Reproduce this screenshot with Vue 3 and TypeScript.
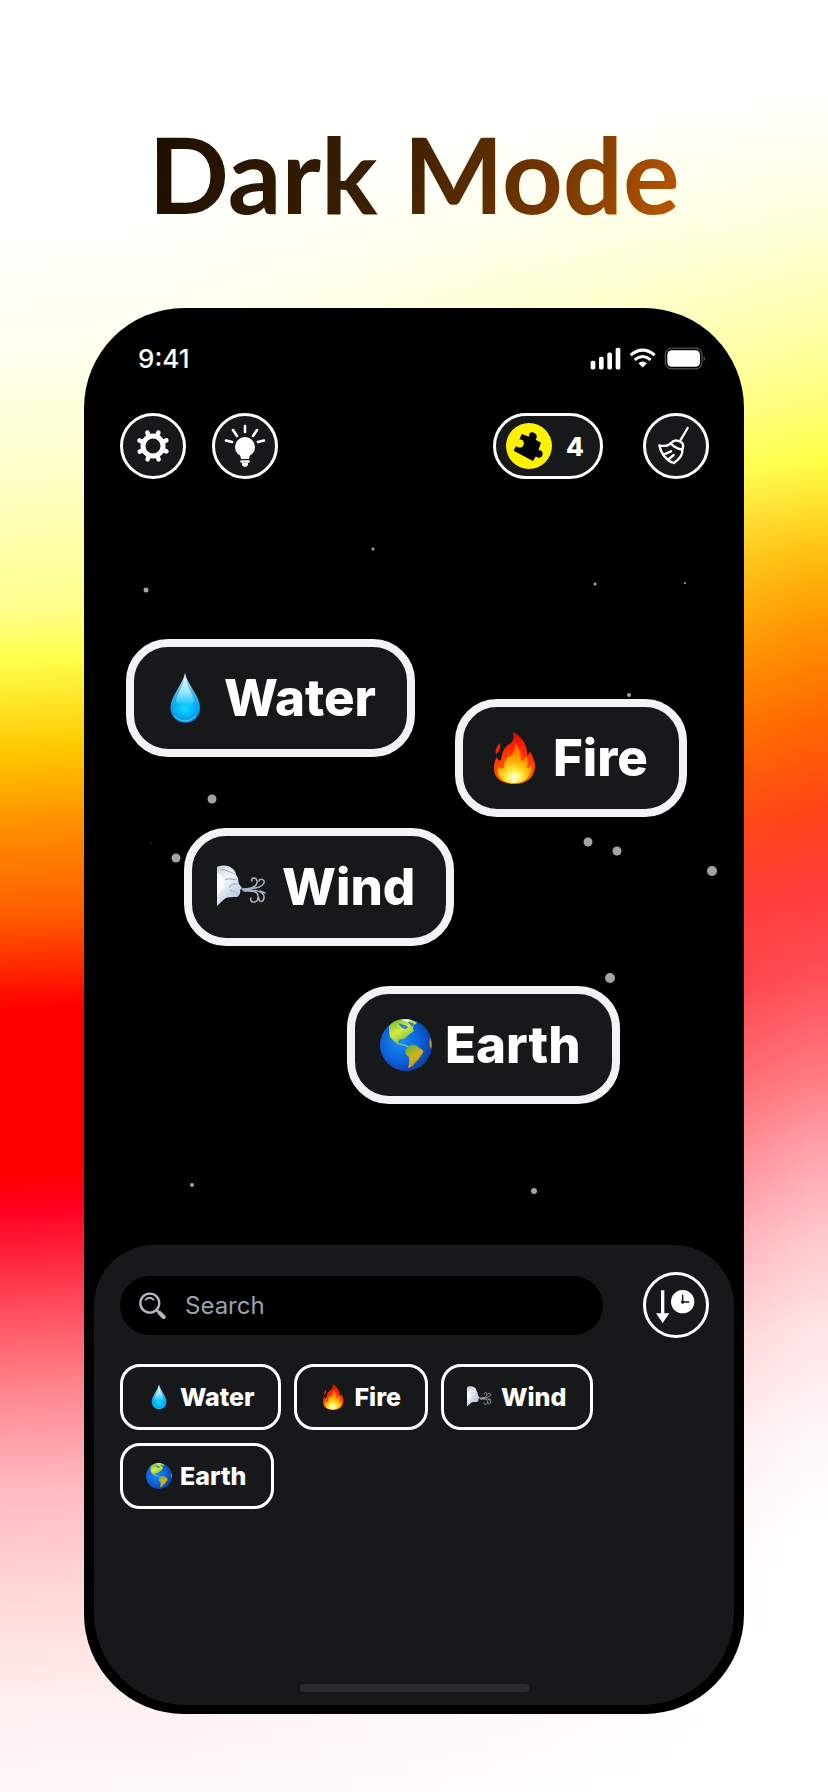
<script setup lang="ts">
import { ref } from 'vue'

interface Item {
  name: string
  icon: string
}

interface Placed extends Item {
  x: number
  y: number
}

interface Star {
  x: number
  y: number
  size: number
}

const items: Item[] = [
  { name: 'Water', icon: 'drop' },
  { name: 'Fire', icon: 'fire' },
  { name: 'Wind', icon: 'wind' },
  { name: 'Earth', icon: 'earth' },
]

const placed: Placed[] = [
  { name: 'Water', icon: 'drop', x: 42, y: 160 },
  { name: 'Fire', icon: 'fire', x: 371, y: 220 },
  { name: 'Wind', icon: 'wind', x: 100, y: 349 },
  { name: 'Earth', icon: 'earth', x: 263, y: 507 },
]

const stars: Star[] = [
  { x: 62, y: 111, size: 5 },
  { x: 289, y: 70, size: 3 },
  { x: 511, y: 105, size: 3 },
  { x: 601, y: 104, size: 2 },
  { x: 545, y: 216, size: 4 },
  { x: 128, y: 320, size: 9 },
  { x: 92, y: 379, size: 9 },
  { x: 504, y: 363, size: 9 },
  { x: 533, y: 372, size: 9 },
  { x: 628, y: 392, size: 10 },
  { x: 526, y: 499, size: 10 },
  { x: 67, y: 364, size: 1 },
  { x: 108, y: 706, size: 4 },
  { x: 450, y: 712, size: 6 },
]

const gearAngles = [22, 67, 112, 157, 202, 247, 292, 337]
const query = ref('')
const pieces = ref(4)
</script>

<template>
  <main class="poster">
    <svg class="defs" aria-hidden="true">
      <defs>
        <linearGradient id="dropFill" x1="0" y1="0" x2="0" y2="1">
          <stop offset="0" stop-color="#d6f6ff" />
          <stop offset="0.35" stop-color="#4fb9ea" />
          <stop offset="0.7" stop-color="#00a4f4" />
          <stop offset="1" stop-color="#0a8fe0" />
        </linearGradient>
        <linearGradient id="dropShine" x1="0" y1="0" x2="0" y2="1">
          <stop offset="0" stop-color="#e4fbff" />
          <stop offset="0.55" stop-color="#a2e6fb" />
          <stop offset="1" stop-color="#12c8fa" />
        </linearGradient>
        <radialGradient id="dropGlow" cx="0.5" cy="0.5" r="0.5">
          <stop offset="0" stop-color="#10dcff" />
          <stop offset="1" stop-color="#10dcff" stop-opacity="0" />
        </radialGradient>
        <radialGradient id="fireFill" gradientUnits="userSpaceOnUse" cx="26" cy="46" r="42">
          <stop offset="0" stop-color="#ff9d00" />
          <stop offset="0.45" stop-color="#ff4a00" />
          <stop offset="0.75" stop-color="#ff2200" />
          <stop offset="1" stop-color="#e01000" />
        </radialGradient>
        <radialGradient id="fireCore" gradientUnits="userSpaceOnUse" cx="26" cy="46" r="32">
          <stop offset="0" stop-color="#fffbd0" />
          <stop offset="0.25" stop-color="#ffea35" />
          <stop offset="0.55" stop-color="#ffa800" />
          <stop offset="1" stop-color="#ff6a00" />
        </radialGradient>
        <radialGradient id="fireGlow" cx="0.5" cy="0.7" r="0.6">
          <stop offset="0" stop-color="#fffde0" />
          <stop offset="1" stop-color="#ffe930" stop-opacity="0" />
        </radialGradient>
        <linearGradient id="faceFill" x1="0" y1="0" x2="0.6" y2="1">
          <stop offset="0" stop-color="#c3d0e2" />
          <stop offset="0.4" stop-color="#f3f7fc" />
          <stop offset="1" stop-color="#b4c3d8" />
        </linearGradient>
        <radialGradient id="seaFill" cx="0.4" cy="0.45" r="0.6">
          <stop offset="0" stop-color="#1d8bf5" />
          <stop offset="0.65" stop-color="#0c5fd8" />
          <stop offset="1" stop-color="#0a3fa4" />
        </radialGradient>
        <linearGradient id="landFill" x1="0" y1="0" x2="0.6" y2="1">
          <stop offset="0" stop-color="#57b83a" />
          <stop offset="0.5" stop-color="#d9ea3c" />
          <stop offset="1" stop-color="#4fb257" />
        </linearGradient>
        <linearGradient id="southFill" x1="0" y1="0" x2="0.5" y2="1">
          <stop offset="0" stop-color="#5fae35" />
          <stop offset="0.6" stop-color="#d2b322" />
          <stop offset="1" stop-color="#b08a20" />
        </linearGradient>
      </defs>
      <symbol id="drop" viewBox="0 0 52 52">
        <path d="M26 1C24 12 11.500 24 11.500 36A14.700 14.700 0 0 0 41 36C41 24 28 12 26 1Z" fill="url(#dropFill)" />
        <ellipse cx="26" cy="37" rx="13" ry="12" fill="url(#dropGlow)" />
        <path d="M26 3C25 13 18 22 17 29C19 34 33 34 35 29C34 22 27 13 26 3Z" fill="url(#dropShine)" />
        <path d="M15 44Q26 54 37 44" fill="none" stroke="#5cd0f6" stroke-width="1" />
      </symbol>
      <symbol id="fire" viewBox="0 0 52 52">
        <path d="M25 0C31 3 40 11 39 23C41 23 42 20 42 19C45 25 48 31 47 36C46 46 38 52 26 52C14 52 6 46 6 37C6 31 7 28 9 25C10 29 12 29 13 28C14 20 17 14 23 11C26 8 26 4 25 0Z" fill="url(#fireFill)" />
        <path d="M12 11C13 16 11 20 8 22C7 17 9 14 12 11Z" fill="#f02800" />
        <path d="M27 11C32 17 33 22 33 29C36 29 37 27 38 24C41 30 39 34 39 36C42 36 44 33 44 32C45 42 38 51 26 51C14 51 8 44 10 34C12 37 14 37 16 36C16 27 20 24 22 25C26 21 28 16 27 11Z" fill="url(#fireCore)" />
        <path d="M26 32C29 36 30 38 32 41C34 40 35 38 35 38C37 45 32 51 26 51C19 51 15 45 18 39C20 42 22 42 23 41Z" fill="url(#fireGlow)" />
      </symbol>
      <symbol id="wind" viewBox="0 0 52 52">
        <path d="M0 6C4 4 10 4 13 6C17 8 19 11 19 14C22 17 21 20 22 23L25 27L23 29C24 32 22 35 20 36C15 36 11 36 9 37C5 40 3 42 0 45Z" fill="url(#faceFill)" />
        <path d="M8 19C12 16 16 20 20 18M12 27C15 23 18 22 20 23M13 29L20 32M3 9C8 7 14 12 18 13" fill="none" stroke="#a4b2c8" stroke-width="1.200" />
        <path d="M0 12C5 13 7 17 7 22C7 29 3 32 0 34Z" fill="#fff" opacity="0.7" />
        <path d="M25 28C31 28 41 27 40 20C39 15 33 17 35 20M26 29C34 27 44 28 47 22C48 18 43 17 42 20M27 30C34 30 42 29 41 37C40 43 32 42 34 37M28 30C36 28 48 30 47 37C46 42 41 41 42 37M43 30L48 32" fill="none" stroke="#a9b6ca" stroke-width="1.500" stroke-linecap="round" />
      </symbol>
      <symbol id="earth" viewBox="0 0 52 52">
        <circle cx="26" cy="26" r="26" fill="url(#seaFill)" />
        <path d="M9 7C12 3 18 0 25 0C30 0 34 2 37 4C33 6 32 9 34 12C30 15 27 17 24 20C21 20 19 20 18 23C19 25 22 24 23 26C20 27 15 24 12 20C9 18 9 12 9 7Z" fill="url(#landFill)" />
        <path d="M18 4C22 6 25 5 28 8C27 11 23 10 21 8ZM27 2L35 5L32 8Z" fill="#2f86cf" />
        <path d="M21 1C24 0 28 0 31 1L28 3Z" fill="#e8f3e4" />
        <path d="M27 29C30 25 36 25 38 28C41 30 44 31 43 34C40 37 39 41 35 44C33 47 30 49 28 49C29 44 30 41 29 38C26 36 24 33 27 29Z" fill="url(#southFill)" />
        <path d="M50 19C52 22 52 28 51 30C49 27 49 22 50 19Z" fill="#b39a3a" />
        <path d="M20 25C23 26 26 26 28 28" fill="none" stroke="#5fc2a0" stroke-width="1.500" />
      </symbol>
    </svg>

    <h1 class="title">Dark Mode</h1>

    <section class="phone">
      <div class="status">
        <time class="clock">9:41</time>
        <svg class="signals" viewBox="358 140 348 68" role="img" aria-label="Signal, Wi-Fi and battery">
          <g fill="#fff">
            <rect x="360" y="181" width="14" height="26" rx="5" />
            <rect x="385" y="169" width="14" height="38" rx="5" />
            <rect x="410" y="156" width="14" height="51" rx="5" />
            <rect x="435" y="142" width="14" height="65" rx="5" />
            <path d="M516 201L503 188Q516 178 529 188Z" />
            <rect x="590" y="149" width="98" height="50" rx="13" />
          </g>
          <path d="M480 164Q516 134 552 164M492 178Q516 158 540 178" fill="none" stroke="#fff" stroke-width="9" />
          <rect x="584" y="143" width="110" height="62" rx="19" fill="none" stroke="#6a6a6a" stroke-width="3" />
          <path d="M699 166Q706 174 699 183Z" fill="#6a6a6a" />
        </svg>
      </div>

      <nav class="toolbar">
        <button class="round" type="button" aria-label="Settings">
          <svg viewBox="0 0 66 66">
            <circle cx="33" cy="33" r="10" fill="none" stroke="#fff" stroke-width="5" />
            <path v-for="angle in gearAngles" :key="angle" d="M33 22V18.500" :transform="`rotate(${angle} 33 33)`" stroke="#fff" stroke-width="4.500" stroke-linecap="round" />
          </svg>
        </button>
        <button class="round" type="button" aria-label="Hints">
          <svg viewBox="0 0 66 66">
            <circle cx="33" cy="34" r="10" fill="#fff" />
            <path d="M28 41H38L37 46H29ZM30 50H36V52Q33 56 30 52Z" fill="#fff" />
            <path d="M29.500 48.500H36.500M33 13V19M21 17L25 23M45 17L41 23M14 27.500L20 29M52 27.500L46 29" stroke="#fff" stroke-width="2.600" stroke-linecap="round" />
          </svg>
        </button>
        <button class="pill" type="button" aria-label="Puzzle pieces">
          <svg viewBox="108 370 138 138">
            <circle cx="177" cy="439" r="69" fill="#fff200" />
            <path d="M155 403L178 411C175 400 184 396 191 399C202 402 202 413 197 420L213 429L205 452C213 449 221 458 217 467C213 477 203 476 198 470L189 484L131 453L138 439C146 446 157 446 161 435C164 424 155 418 148 420Z" fill="#000" />
          </svg>
          <span>{{ pieces }}</span>
        </button>
        <button class="round" type="button" aria-label="Clear board">
          <svg viewBox="518 340 198 198">
            <g fill="none" stroke="#fff" stroke-width="7" stroke-linecap="round" stroke-linejoin="round">
              <path d="M652 385L629 424" />
              <path d="M601 431Q616 414 636 430Q641 438 636 450Q615 447 601 431Z" />
              <path d="M601 431C591 441 580 440 567 437C572 463 590 484 611 490C629 477 638 464 636 450" />
              <path d="M584 463L602 455M596 478L610 466" />
            </g>
          </svg>
        </button>
      </nav>

      <div class="board">
        <i
          v-for="(star, index) in stars"
          :key="index"
          class="star"
          :style="{ left: `${star.x}px`, top: `${star.y}px`, width: `${star.size}px`, height: `${star.size}px` }"
        ></i>
        <button
          v-for="item in placed"
          :key="item.name"
          class="card"
          type="button"
          :style="{ left: `${item.x}px`, top: `${item.y}px` }"
        >
          <svg aria-hidden="true"><use :href="`#${item.icon}`" /></svg>
          <span>{{ item.name }}</span>
        </button>
      </div>

      <section class="drawer">
        <div class="tools">
          <label class="search">
            <svg viewBox="165 168 80 80" aria-hidden="true">
              <g fill="none" stroke="#b3b9c2" stroke-linecap="round">
                <circle cx="197" cy="201" r="28" stroke-width="7" />
                <path d="M184 191Q196 179 209 191" stroke-width="5" />
                <path d="M219 223L226 230" stroke-width="7" />
                <path d="M226 230L238 242" stroke-width="12" />
              </g>
            </svg>
            <input v-model="query" type="search" placeholder="Search" aria-label="Search" />
          </label>
          <button class="round" type="button" aria-label="Sort by time">
            <svg viewBox="698 110 198 198">
              <path d="M752 165H762V234H777L757 263L737 234H752Z" fill="#fff" />
              <circle cx="817" cy="199" r="35" fill="#fff" />
              <path d="M817 178V200H837" fill="none" stroke="#17181a" stroke-width="4" />
              <circle cx="817" cy="200" r="5" fill="#17181a" />
            </svg>
          </button>
        </div>
        <ul class="chips">
          <li v-for="item in items" :key="item.name">
            <button class="chip" type="button">
              <svg aria-hidden="true"><use :href="`#${item.icon}`" /></svg>
              <span>{{ item.name }}</span>
            </button>
          </li>
        </ul>
        <div class="home"></div>
      </section>
    </section>
  </main>
</template>

<style>
body {
  margin: 0;
}
</style>

<style scoped>
.poster {
  box-sizing: border-box;
  position: relative;
  isolation: isolate;
  min-height: 100vh;
  padding: 100px 84px 78px;
  font-family: Inter, "Liberation Sans", sans-serif;
  color: #fff;
  background: linear-gradient(
    177deg,
    #ffffff 11%, #fffff0 19%, #ffffc8 26%, #ffff90 33%, #ffff4c 36%, #ffc800 41%,
    #ff9000 45%, #ff5c00 50%, #ff0000 55%, #ff0000 64%, #ff0022 66%, #ff4858 71%,
    #ff8890 76%, #ffb8c0 81%, #ffd8d8 87%, #fff0f0 93%, #fffafa 99%
  );
}

.poster::before {
  content: "";
  position: absolute;
  inset: 0;
  z-index: -1;
  background: linear-gradient(
    176deg,
    #ffffff 4%, #fffffa 9%, #ffffdc 15%, #ffffa8 21%, #ffff78 25%, #ffff48 28%,
    #ffc010 33%, #ff9400 37%, #ff6800 42%, #ff4418 47%, #ff3c3c 51%, #ff5058 56%,
    #ff7880 61%, #ffa0a8 65%, #ffc8cc 70%, #ffe4e6 75%, #fff8f8 81%, #ffffff 86%
  );
  mask-image: linear-gradient(90deg, transparent 20%, #000 98%);
}

.defs {
  position: absolute;
  width: 0;
  height: 0;
}

.title {
  margin: 0;
  height: 208px;
  font-family: Lato, "Open Sans", sans-serif;
  font-size: 106px;
  font-weight: 700;
  line-height: 146px;
  text-align: center;
  white-space: nowrap;
  color: transparent;
  background: linear-gradient(110deg, #1c0e00 10%, #3c2000 45%, #743700 68%, #c25a00 88%);
  background-clip: text;
}

.phone {
  display: flex;
  flex-direction: column;
  overflow: hidden;
  border-radius: 100px;
  background: #000;
}

.status {
  display: flex;
  align-items: center;
  justify-content: space-between;
  height: 105px;
  box-sizing: border-box;
  padding: 0 38px 4px 54px;
}

.clock {
  font-size: 26px;
  font-weight: 500;
}

.signals {
  width: 116px;
  height: 23px;
}

.toolbar {
  display: flex;
  gap: 26px;
  padding: 0 35px 0 36px;
}

.round,
.pill {
  box-sizing: border-box;
  flex: none;
  height: 66px;
  padding: 0;
  border: 3px solid #fff;
  border-radius: 33px;
  background: #17181a;
  color: #fff;
  font: inherit;
}

.round {
  display: grid;
  place-items: center;
  width: 66px;
}

.round svg {
  display: block;
  width: 66px;
  height: 66px;
  margin: -3px;
}

.pill {
  display: flex;
  align-items: center;
  gap: 14px;
  width: 110px;
  margin-left: auto;
  margin-right: 14px;
  padding-left: 10px;
  font-size: 26px;
  font-weight: 800;
}

.pill svg {
  width: 46px;
  height: 46px;
}

.board {
  position: relative;
  height: 766px;
}

.star {
  position: absolute;
  transform: translate(-50%, -50%);
  border-radius: 50%;
  background: #a3a3a3;
}

.card {
  position: absolute;
  display: flex;
  align-items: center;
  gap: 13px;
  box-sizing: border-box;
  height: 118px;
  padding: 0 31px 0 25px;
  border: 8px solid #f3f3f6;
  border-radius: 42px;
  background: #17181a;
  color: #fff;
  font-family: inherit;
  font-size: 51px;
  font-weight: 800;
  line-height: 60px;
}

.card svg {
  width: 52px;
  height: 52px;
}

.drawer {
  display: flex;
  flex-direction: column;
  gap: 26px;
  min-height: 460px;
  box-sizing: border-box;
  margin: 0 10px 9px;
  padding: 27px 25px 13px 26px;
  border-radius: 60px 60px 92px 92px;
  background: #17181a;
}

.tools {
  display: flex;
  align-items: center;
  gap: 40px;
}

.search {
  display: flex;
  flex: 1;
  align-items: center;
  gap: 19px;
  height: 59px;
  padding: 0 19px;
  border-radius: 30px;
  background: #000;
}

.search svg {
  flex: none;
  width: 27px;
  height: 27px;
}

.search input {
  flex: 1;
  min-width: 0;
  padding: 0;
  border: 0;
  outline: 0;
  background: transparent;
  color: #fff;
  font-family: inherit;
  font-size: 24px;
}

.search input::placeholder {
  color: #9ca3af;
  opacity: 1;
}

.chips {
  display: flex;
  flex-wrap: wrap;
  gap: 13px;
  margin: 0;
  padding: 0 80px 0 0;
  list-style: none;
}

.chip {
  display: flex;
  align-items: center;
  gap: 8px;
  box-sizing: border-box;
  height: 66px;
  padding: 0 24px 0 23px;
  border: 3px solid #fff;
  border-radius: 20px;
  background: #17181a;
  color: #fff;
  font-family: inherit;
  font-size: 25px;
  font-weight: 800;
}

.chip svg {
  width: 26px;
  height: 26px;
}

.home {
  align-self: center;
  width: 39%;
  height: 8px;
  margin-top: auto;
  border-radius: 4px;
  background: #2c2c2f;
}
</style>
